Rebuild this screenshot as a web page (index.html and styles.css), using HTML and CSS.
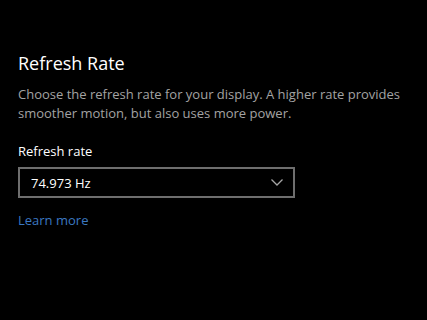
FILE: index.html
```html
<!DOCTYPE html>
<html lang="en">
  <head>
    <meta charset="UTF-8" />
    <meta name="viewport" content="width=device-width, initial-scale=1.0" />
    <title>Refresh Rate</title>
    <link rel="stylesheet" href="styles.css">
  </head>
  <body>
    <div class="settings-page">
      <h1>Refresh Rate</h1>
      <p class="desc">
        Choose the refresh rate for your display. A higher rate provides
        smoother motion, but also uses more power.
      </p>

      <!-- rate picker -->
      <label class="field-label">Refresh rate</label>
      <div class="dropdown">
        <span>74.973 Hz</span>
        <svg class="chevron" width="12" height="7" viewBox="0 0 12 7">
          <path d="M0.5 0.5 L6 6 L11.5 0.5" fill="none" stroke="#a6a6a6" stroke-width="1.3" />
        </svg>
      </div>

      <a class="link" href="#">Learn more</a>
    </div>
  </body>
</html>
```

FILE: styles.css
```css
body {
  margin: 0;
  background: #000;
  font-family: 'Open Sans', 'Noto Sans', sans-serif;
  color: #fff;
}

.settings-page {
  padding: 48px 18px 0;
  display: flex;
  flex-direction: column;
  align-items: flex-start;
}

h1 {
  margin: 0;
  font-size: 18px;
  font-weight: 400;
  line-height: 30px;
}

.desc {
  margin: 7px 0 0;
  font-size: 13px;
  line-height: 19px;
  color: #a3a3a3;
  width: 400px;
}

.field-label {
  margin-top: 18px;
  font-size: 13px;
  line-height: 20px;
}

/* 下拉框 */
.dropdown {
  margin-top: 6px;
  box-sizing: border-box;
  width: 277px;
  height: 31px;
  border: 2px solid #6e6e6e;
  display: flex;
  align-items: center;
  justify-content: space-between;
  padding: 0 10px 0 11px;
  font-size: 13px;
}

.chevron {
  display: block;
}

.link {
  margin-top: 12px;
  font-size: 13px;
  line-height: 20px;
  color: #3b78c2;
  text-decoration: none;
}
```
